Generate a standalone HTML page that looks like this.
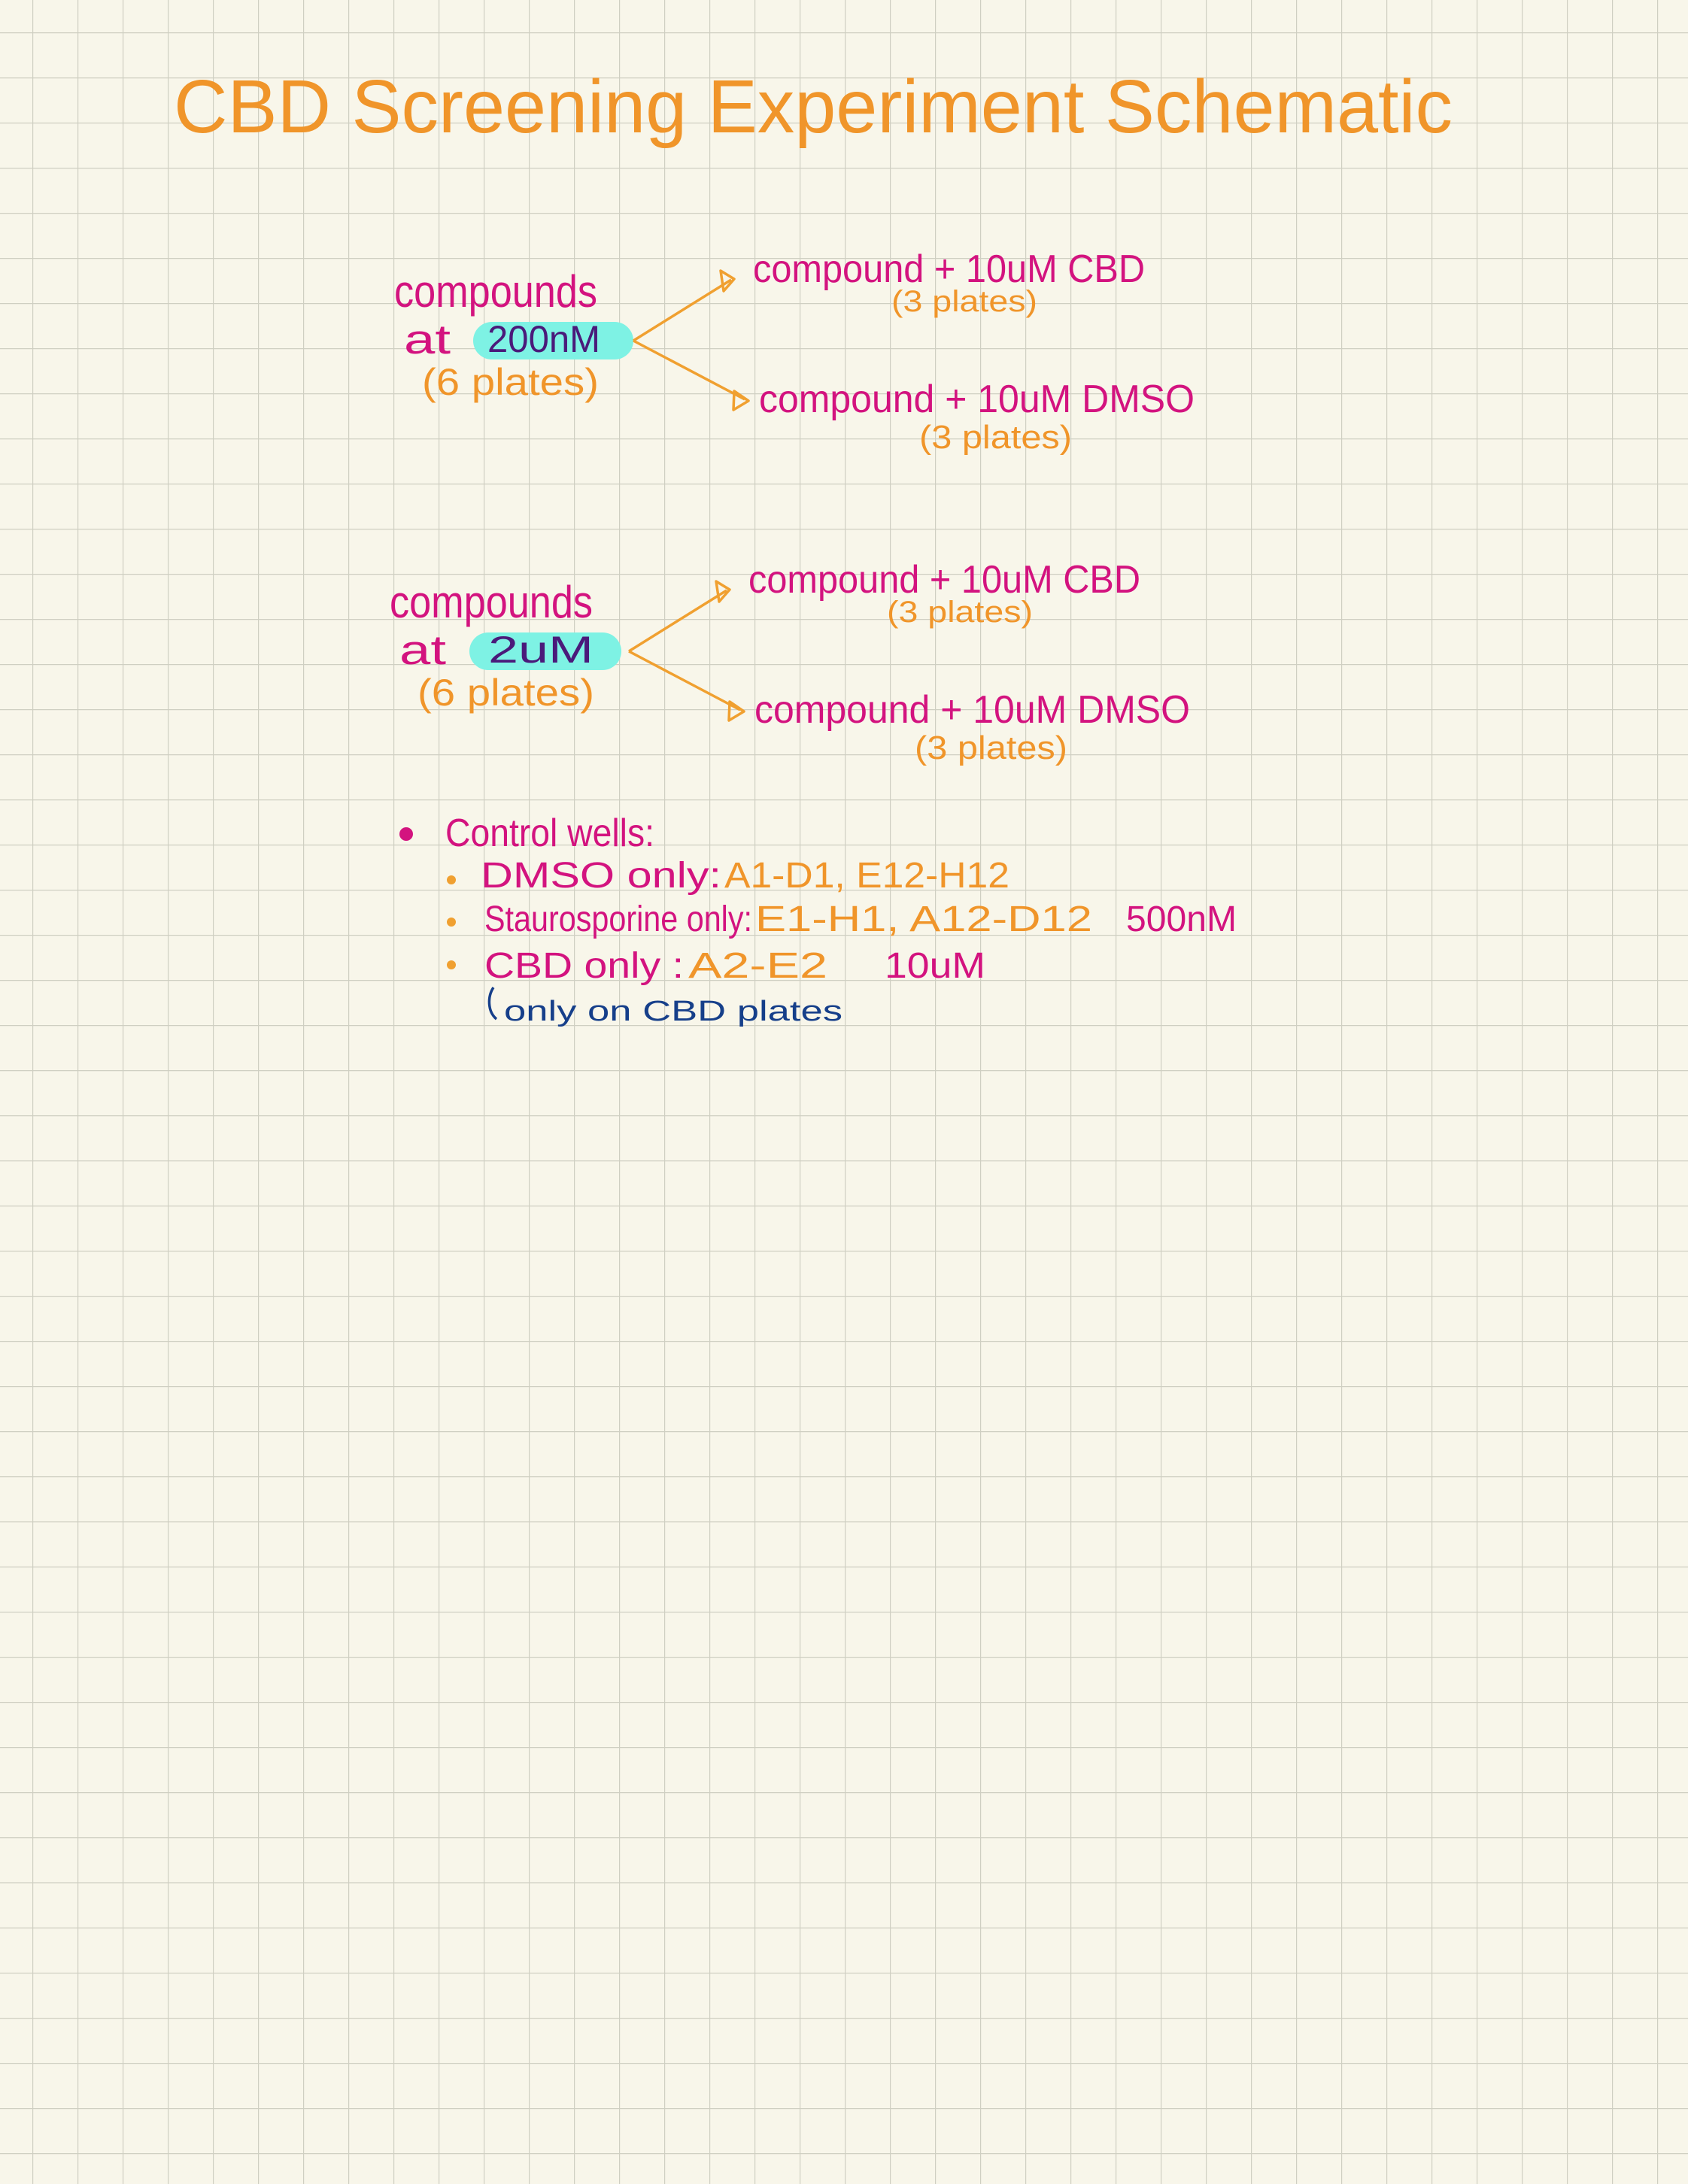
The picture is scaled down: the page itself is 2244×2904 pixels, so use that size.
<!DOCTYPE html>
<html><head><meta charset="utf-8"><style>
html,body{margin:0;padding:0;background:#f8f6ea}
svg{display:block}
text{font-family:"Liberation Sans",sans-serif}
</style></head><body>
<svg width="2244" height="2904" viewBox="0 0 2244 2904" xmlns="http://www.w3.org/2000/svg">
<defs>
<pattern id="g" x="43" y="43" width="60" height="60" patternUnits="userSpaceOnUse">
<path d="M0 0H60M0 0V60" stroke="#cfcfc2" stroke-width="2.4" fill="none"/>
</pattern>
</defs>
<rect width="2244" height="2904" fill="#f8f6ea"/>
<rect width="2244" height="2904" fill="url(#g)"/>

<text x="231" y="176" font-size="100" fill="#f0952a" textLength="1700" lengthAdjust="spacingAndGlyphs">CBD Screening Experiment Schematic</text>

<g id="b1">
<text x="524" y="408" font-size="60" fill="#d3137f" textLength="270" lengthAdjust="spacingAndGlyphs">compounds</text>
<text x="537" y="470" font-size="55" fill="#d3137f" textLength="62" lengthAdjust="spacingAndGlyphs">at</text>
<rect x="629" y="428" width="213" height="50" rx="25" fill="#7ef2e4"/>
<text x="648" y="468" font-size="50" fill="#4a1a7a" textLength="150" lengthAdjust="spacingAndGlyphs">200nM</text>
<text x="561" y="525" font-size="50" fill="#f0952a" textLength="235" lengthAdjust="spacingAndGlyphs">(6 plates)</text>
<path d="M842 453L972 372M842 453L990 531" stroke="#f0a030" stroke-width="3.5" fill="none"/>
<path d="M958 360L976 371L962 387Z" stroke="#f0a030" stroke-width="3.5" fill="none" stroke-linejoin="round"/>
<path d="M976 520L995 533L975 545Z" stroke="#f0a030" stroke-width="3.5" fill="none" stroke-linejoin="round"/>
<text x="1001" y="375" font-size="52" fill="#d3137f" textLength="521" lengthAdjust="spacingAndGlyphs">compound + 10uM CBD</text>
<text x="1185" y="414" font-size="40" fill="#f0952a" textLength="194" lengthAdjust="spacingAndGlyphs">(3 plates)</text>
<text x="1009" y="548" font-size="52" fill="#d3137f" textLength="579" lengthAdjust="spacingAndGlyphs">compound + 10uM DMSO</text>
<text x="1222" y="596" font-size="44" fill="#f0952a" textLength="203" lengthAdjust="spacingAndGlyphs">(3 plates)</text>
</g>

<g transform="translate(-6,413)">
<text x="524" y="408" font-size="60" fill="#d3137f" textLength="270" lengthAdjust="spacingAndGlyphs">compounds</text>
<text x="537" y="470" font-size="55" fill="#d3137f" textLength="62" lengthAdjust="spacingAndGlyphs">at</text>
<rect x="630" y="428" width="202" height="50" rx="25" fill="#7ef2e4"/>
<text x="655" y="468" font-size="50" fill="#4a1a7a" textLength="140" lengthAdjust="spacingAndGlyphs">2uM</text>
<text x="561" y="525" font-size="50" fill="#f0952a" textLength="235" lengthAdjust="spacingAndGlyphs">(6 plates)</text>
<path d="M842 453L972 372M842 453L990 531" stroke="#f0a030" stroke-width="3.5" fill="none"/>
<path d="M958 360L976 371L962 387Z" stroke="#f0a030" stroke-width="3.5" fill="none" stroke-linejoin="round"/>
<path d="M976 520L995 533L975 545Z" stroke="#f0a030" stroke-width="3.5" fill="none" stroke-linejoin="round"/>
<text x="1001" y="375" font-size="52" fill="#d3137f" textLength="521" lengthAdjust="spacingAndGlyphs">compound + 10uM CBD</text>
<text x="1185" y="414" font-size="40" fill="#f0952a" textLength="194" lengthAdjust="spacingAndGlyphs">(3 plates)</text>
<text x="1009" y="548" font-size="52" fill="#d3137f" textLength="579" lengthAdjust="spacingAndGlyphs">compound + 10uM DMSO</text>
<text x="1222" y="596" font-size="44" fill="#f0952a" textLength="203" lengthAdjust="spacingAndGlyphs">(3 plates)</text>
</g>

<circle cx="540" cy="1109" r="9" fill="#d3137f"/>
<text x="592" y="1125" font-size="52" fill="#d3137f" textLength="278" lengthAdjust="spacingAndGlyphs">Control wells:</text>

<circle cx="600" cy="1170" r="6" fill="#f0a030"/>
<circle cx="600" cy="1226" r="6" fill="#f0a030"/>
<circle cx="600" cy="1283" r="6" fill="#f0a030"/>

<text x="639" y="1180" font-size="48" fill="#d3137f" textLength="320" lengthAdjust="spacingAndGlyphs">DMSO only:</text>
<text x="963" y="1180" font-size="48" fill="#f0952a" textLength="379" lengthAdjust="spacingAndGlyphs">A1-D1, E12-H12</text>

<text x="644" y="1238" font-size="48" fill="#d3137f" textLength="356" lengthAdjust="spacingAndGlyphs">Staurosporine only:</text>
<text x="1004" y="1238" font-size="48" fill="#f0952a" textLength="448" lengthAdjust="spacingAndGlyphs">E1-H1, A12-D12</text>
<text x="1497" y="1238" font-size="48" fill="#d3137f" textLength="147" lengthAdjust="spacingAndGlyphs">500nM</text>

<text x="644" y="1300" font-size="48" fill="#d3137f" textLength="265" lengthAdjust="spacingAndGlyphs">CBD only :</text>
<text x="915" y="1300" font-size="48" fill="#f0952a" textLength="185" lengthAdjust="spacingAndGlyphs">A2-E2</text>
<text x="1176" y="1300" font-size="48" fill="#d3137f" textLength="134" lengthAdjust="spacingAndGlyphs">10uM</text>

<path d="M656 1313C648 1325 648 1345 660 1355" stroke="#163f8a" stroke-width="3.5" fill="none"/>
<text x="670" y="1357" font-size="38" fill="#163f8a" textLength="450" lengthAdjust="spacingAndGlyphs">only on CBD plates</text>
</svg>
</body></html>
